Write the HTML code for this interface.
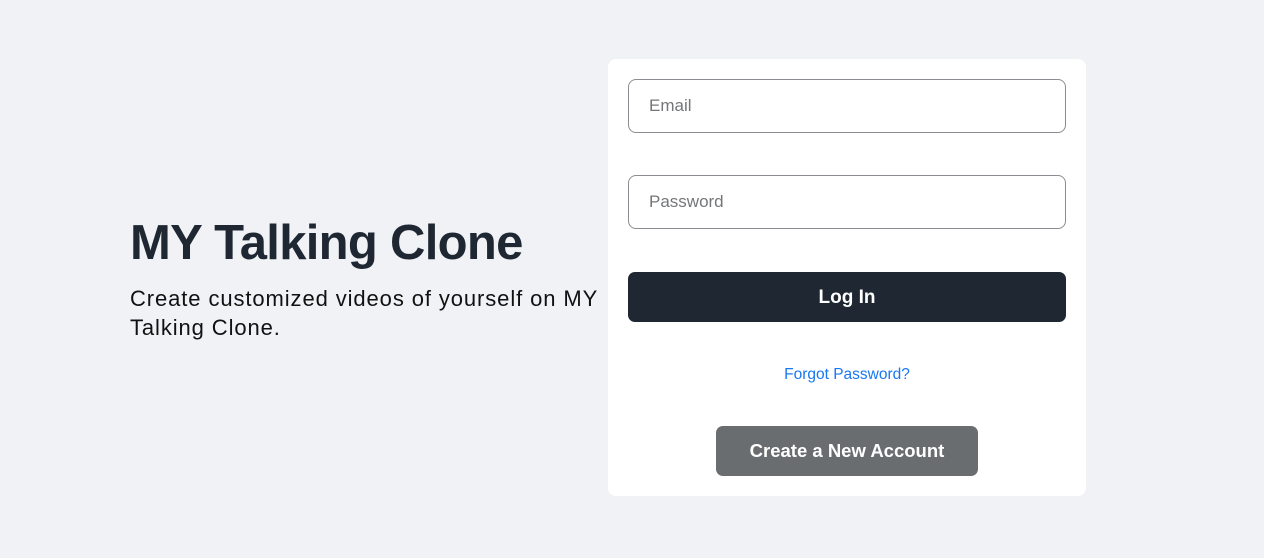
<!DOCTYPE html>
<html><head><style>
body{margin:0;background:#f0f2f5;font-family:"Liberation Sans",Arial,sans-serif;width:1264px;height:558px;position:relative;overflow:hidden}
h1{position:absolute;left:130px;top:215px;margin:0;font-size:49px;font-weight:bold;color:#1f2733;letter-spacing:-0.7px;white-space:nowrap}
p{position:absolute;left:130px;top:284px;margin:0;font-size:22px;line-height:29px;color:#111;white-space:nowrap;letter-spacing:0.9px}
.card{position:absolute;left:608px;top:59px;width:478px;height:437px;background:#fff;border-radius:8px}
.inp{position:absolute;left:20px;width:436px;height:52px;border:1px solid #8a8d91;border-radius:8px;font-size:17px;color:#74767a;box-sizing:content-box}
.inp span{position:absolute;left:20px;top:16px}
.btn{position:absolute;left:20px;top:213px;width:438px;height:50px;background:#1f2733;border-radius:7px;color:#fff;font-weight:bold;font-size:19px;text-align:center;line-height:52px}
.fp{position:absolute;left:0;width:478px;top:307px;text-align:center;color:#1877f2;font-size:15.5px}
.ca{position:absolute;left:108px;top:367px;width:262px;height:50px;background:#6a6d70;border-radius:7px;color:#fff;font-weight:bold;font-size:18.5px;text-align:center;line-height:50px}
</style></head><body>
<h1>MY Talking Clone</h1>
<p>Create customized videos of yourself on MY<br>Talking Clone.</p>
<div class="card">
<div class="inp" style="top:20px"><span>Email</span></div>
<div class="inp" style="top:116px"><span>Password</span></div>
<div class="btn">Log In</div>
<div class="fp">Forgot Password?</div>
<div class="ca">Create a New Account</div>
</div>
</body></html>
